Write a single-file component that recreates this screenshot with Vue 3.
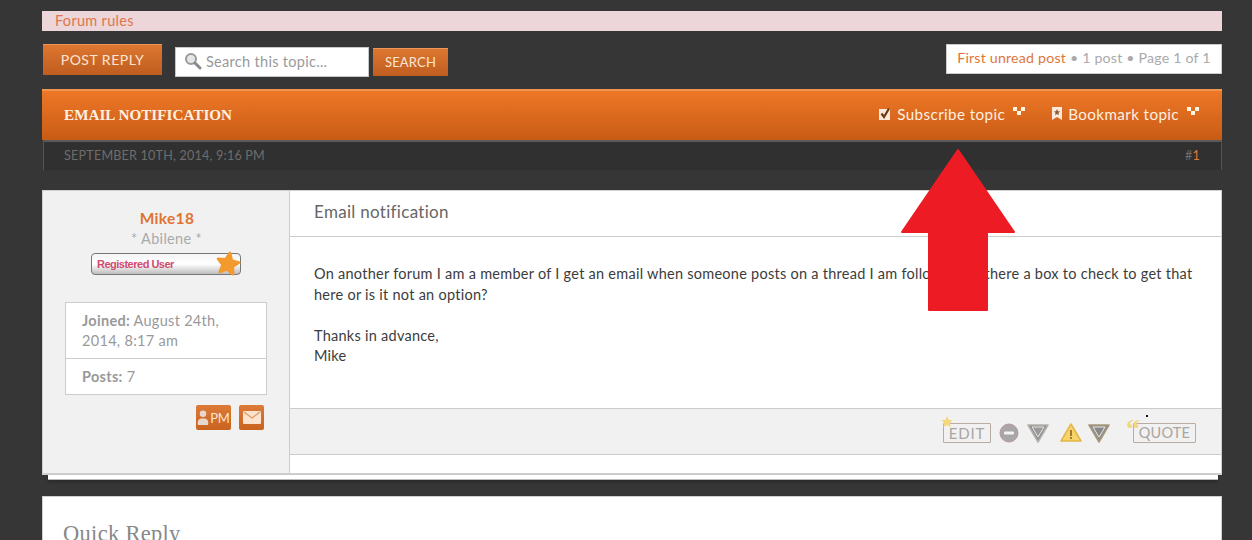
<template>
  <div class="page">
    <div class="rules">Forum rules</div>

    <div class="actions">
      <a class="btn post-reply">POST REPLY</a>
      <div class="search">
        <svg class="search-icon" width="18" height="18" viewBox="0 0 18 18">
          <circle cx="7" cy="7" r="5" fill="#e4e6e8" stroke="#9a9a9a" stroke-width="2" />
          <path d="M11 11l5 5" stroke="#8a8a8a" stroke-width="3" stroke-linecap="round" />
        </svg>
        <span>Search this topic...</span>
      </div>
      <a class="btn search-btn">SEARCH</a>
      <div class="pagination">
        <a class="link">First unread post</a>
        <span> • 1 post • Page 1 of 1</span>
      </div>
    </div>

    <div class="topic-head">
      <h2>EMAIL NOTIFICATION</h2>
      <div class="topic-tools">
        <a>
          <svg width="14" height="14" viewBox="0 0 14 14">
            <rect x="1" y="2" width="11" height="11" fill="#fbeadb" />
            <path d="M3.500 6.500l2.500 3.500 5-8.500" fill="none" stroke="#6b3a17" stroke-width="2.200" />
          </svg>
          <span>Subscribe topic</span>
          <svg class="dots" width="14" height="10" viewBox="0 0 14 10">
            <path d="M1 1h4v4H1zM9 1h4v4H9zM5 5h4v4H5z" fill="#fff3e2" />
          </svg>
        </a>
        <a>
          <svg width="12" height="15" viewBox="0 0 12 15">
            <path d="M1 1h10v13L6 11l-5 3z" fill="#fbeadb" />
            <path d="M6 3l1 2.300h2L7.400 7 8 9.300 6 8 4 9.300 4.600 7 3 5.300h2z" fill="#8d5a36" />
          </svg>
          <span>Bookmark topic</span>
          <svg class="dots" width="14" height="10" viewBox="0 0 14 10">
            <path d="M1 1h4v4H1zM9 1h4v4H9zM5 5h4v4H5z" fill="#fff3e2" />
          </svg>
        </a>
      </div>
    </div>

    <div class="topic-sub">
      <span>SEPTEMBER 10TH, 2014, 9:16 PM</span>
      <span>#<b>1</b></span>
    </div>

    <div class="post">
      <aside class="profile">
        <div class="username">Mike18</div>
        <div class="location">* Abilene *</div>
        <div class="rank">
          <span>Registered User</span>
          <svg class="rank-star" width="28" height="28" viewBox="0 0 28 28">
            <path transform="rotate(10 14 14)" d="M14 3L17 10 24.500 10.700 19 15.700 20.600 23 14 19.200 7.400 23 9 15.700 3.500 10.700 11 10z" fill="#f39a2e" stroke="#f39a2e" stroke-width="3" stroke-linejoin="round" />
          </svg>
        </div>
        <div class="stats">
          <div class="stat"><b>Joined:</b> August 24th, 2014, 8:17 am</div>
          <div class="stat"><b>Posts:</b> 7</div>
        </div>
        <div class="contact">
          <a class="contact-btn pm">
            <svg width="12" height="17" viewBox="0 0 13 18">
              <circle cx="6.500" cy="5" r="3.500" fill="#e6d8cf" />
              <path d="M1 17c-1-5 1-7 5.500-7s6.500 2 5.500 7z" fill="#e6d8cf" />
            </svg>
            PM
          </a>
          <a class="contact-btn mail">
            <svg width="18" height="13" viewBox="0 0 18 13">
              <rect width="18" height="13" rx="1" fill="#fae3cf" />
              <path d="M1 1l8 6 8-6" fill="none" stroke="#e39a63" stroke-width="1.300" />
            </svg>
          </a>
        </div>
      </aside>

      <div class="post-main">
        <h3>Email notification</h3>
        <div class="post-body">
          <p>On another forum I am a member of I get an email when someone posts on a thread I am following. Is there a box to check to get that here or is it not an option?</p>
          <p>Thanks in advance,<br />Mike</p>
        </div>
        <div class="post-foot">
          <a class="outline-btn edit">
            <svg class="corner" width="12" height="12" viewBox="0 0 12 12">
              <path d="M6 0l1.700 3.900 4.300.4-3.200 2.800 1 4.200L6 9.100l-3.800 2.200 1-4.200L0 4.300l4.300-.4z" fill="#f3d77b" />
            </svg>
            EDIT
          </a>
          <svg class="tool minus" width="20" height="20" viewBox="0 0 20 20">
            <circle cx="10" cy="10" r="9" fill="#a8a6a6" stroke="#b89a9a" />
            <rect x="5" y="8.500" width="10" height="3" rx="1" fill="#f4f4f4" />
          </svg>
          <svg class="tool down" width="22" height="20" viewBox="0 0 22 20">
            <path d="M1 2h20L11 19z" fill="#8f8f8f" stroke="#b5b0aa" stroke-width="1.500" stroke-linejoin="round" />
            <path d="M5 4h12l-6 10z" fill="#999" stroke="#e8e8e8" />
          </svg>
          <svg class="tool warn" width="22" height="20" viewBox="0 0 22 20">
            <path d="M11 1l10 17H1z" fill="#f7d46a" stroke="#e2b648" stroke-width="1.500" stroke-linejoin="round" />
            <path d="M10 7h2v6h-2zM10 14h2v2h-2z" fill="#a5792b" />
          </svg>
          <svg class="tool report" width="22" height="20" viewBox="0 0 22 20">
            <path d="M1 2h20L11 19z" fill="#8f8f8f" stroke="#a89678" stroke-width="1.500" stroke-linejoin="round" />
            <path d="M5 4h12l-6 10z" fill="#888" stroke="#e8e8e8" />
          </svg>
          <a class="outline-btn quote">
            <span class="quote-mark">“</span>
            QUOTE
          </a>
        </div>
        <div class="post-end"></div>
      </div>
    </div>
    <div class="post-shadow"></div>

    <div class="quick-reply">
      <h3>Quick Reply</h3>
    </div>

    <svg class="arrow" width="116" height="164" viewBox="0 0 116 164">
      <path d="M58 2L114 84H87V162H29V84H2z" fill="#ed1c24" stroke="#ed1c24" stroke-width="2" stroke-linejoin="round" />
    </svg>
    <span class="speck"></span>
  </div>
</template>

<script setup>
</script>

<style>
html,
body {
  margin: 0;
  background: #363636;
}
</style>

<style scoped>
.page {
  position: relative;
  height: 540px;
  overflow: hidden;
  box-sizing: border-box;
  padding: 11px 30px 0 42px;
  background: #363636;
  font-family: Lato, "Open Sans", sans-serif;
  font-size: 14.500px;
  letter-spacing: 0.300px;
  color: #3c3c3c;
}

.rules {
  height: 20px;
  line-height: 20px;
  padding-left: 13px;
  background: #ecd6d9;
  color: #e2744a;
}

.actions {
  display: flex;
  align-items: flex-start;
  height: 45px;
  margin-top: 13px;
}

.btn {
  box-sizing: border-box;
  display: block;
  text-align: center;
  color: #fbe6d4;
  background: linear-gradient(#dd7730, #bf5d20);
  border-top: 1px solid #ea955a;
}

.post-reply {
  width: 119px;
  height: 31px;
  margin-left: 1px;
  line-height: 29px;
  font-size: 14px;
  letter-spacing: 0.500px;
}

.search {
  box-sizing: border-box;
  display: flex;
  align-items: center;
  gap: 4px;
  width: 194px;
  height: 30px;
  margin: 3px 4px 0 13px;
  padding: 0 0 2px 8px;
  background: #fff;
  border: 1px solid #c8c8c8;
  color: #999;
  white-space: nowrap;
}

.search-icon {
  flex: none;
}

.search-btn {
  width: 75px;
  height: 28px;
  margin-top: 4px;
  line-height: 26px;
  font-size: 13px;
  letter-spacing: 0.200px;
}

.pagination {
  box-sizing: border-box;
  width: 276px;
  height: 30px;
  margin-left: auto;
  line-height: 26px;
  text-align: center;
  white-space: nowrap;
  font-size: 14.200px;
  letter-spacing: 0.200px;
  background: #fff;
  border: 1px solid #ccc;
  color: #aaa;
}

.link {
  color: #e0763a;
}

.topic-head {
  box-sizing: border-box;
  display: flex;
  align-items: center;
  justify-content: space-between;
  height: 51px;
  padding: 0 22px 2px 22px;
  background: linear-gradient(#ee7727, #c85c15);
  border-top: 2px solid #f09550;
}

.topic-head h2 {
  margin: 0;
  font-family: "Liberation Serif", serif;
  font-size: 15.200px;
  letter-spacing: 0;
  font-weight: 700;
  color: #fdf0e2;
}

.topic-tools {
  display: flex;
  gap: 25px;
  margin-top: -2px;
  color: #fdf0e2;
  font-size: 15.200px;
  letter-spacing: 0.400px;
}

.topic-tools a {
  display: flex;
  align-items: center;
  gap: 5px;
}

.dots {
  margin: -5px 0 0 2px;
}

.topic-sub {
  box-sizing: border-box;
  display: flex;
  align-items: center;
  justify-content: space-between;
  height: 30px;
  margin-left: 1px;
  padding: 0 21px 2px 20px;
  background: #303030;
  border-top: 2px solid #5c5a58;
  border-left: 1px solid #555;
  border-right: 1px solid #555;
  color: #6d6d6d;
  font-size: 12.600px;
  letter-spacing: 0.200px;
}

.topic-sub b {
  color: #e0763a;
  font-weight: 400;
}

.post {
  box-sizing: border-box;
  display: flex;
  height: 285px;
  margin-top: 20px;
  background: #fff;
  border: 1px solid #d0d0d0;
  border-bottom-width: 2px;
}

.profile {
  box-sizing: border-box;
  flex: none;
  width: 247px;
  padding: 17px 22px 0;
  background: #f1f1f1;
  border-right: 1px solid #ccc;
  text-align: center;
}

.username {
  padding-left: 2px;
  color: #df7433;
  font-size: 15.500px;
  font-weight: 700;
  line-height: 20px;
}

.location {
  padding-left: 1px;
  margin-top: 2px;
  color: #aaa;
  line-height: 18px;
}

.rank {
  position: relative;
  box-sizing: border-box;
  width: 150px;
  height: 22px;
  margin: 5px 0 0 26px;
  padding-left: 5px;
  line-height: 20px;
  text-align: left;
  font-family: "Liberation Sans", sans-serif;
  font-size: 11px;
  font-weight: 700;
  letter-spacing: -0.500px;
  color: #d04a70;
  background: linear-gradient(#f4f4f4, #fff 50%, #bdbdbd);
  border: 1px solid #777;
  border-radius: 4px;
}

.rank-star {
  position: absolute;
  top: -4px;
  right: -2px;
}

.stats {
  box-sizing: border-box;
  width: 202px;
  margin-top: 27px;
  background: #fff;
  border: 1px solid #ccc;
  text-align: left;
  color: #999;
}

.stat {
  padding: 8px 16px 7px;
  line-height: 20px;
}

.stat + .stat {
  border-top: 1px solid #ccc;
  padding: 8px 16px 7px;
}

.contact {
  display: flex;
  justify-content: flex-end;
  gap: 8px;
  width: 199px;
  margin-top: 10px;
}

.contact-btn {
  box-sizing: border-box;
  display: flex;
  align-items: center;
  justify-content: center;
  height: 25px;
  color: #fbe6d4;
  font-size: 13px;
  letter-spacing: -0.300px;
  background: linear-gradient(#dd7a38, #c9631f);
  border-radius: 2px;
}

.pm {
  width: 35px;
  gap: 1px;
}

.mail {
  width: 25px;
}

.post-main {
  flex: 1;
  display: flex;
  flex-direction: column;
  min-width: 0;
}

.post-main h3 {
  box-sizing: border-box;
  height: 46px;
  margin: 0;
  padding-left: 24px;
  line-height: 42px;
  font-size: 17px;
  font-weight: 400;
  color: #666;
  border-bottom: 1px solid #ccc;
}

.post-body {
  box-sizing: border-box;
  height: 171px;
  padding: 27px 24px 0;
  line-height: 20.500px;
  letter-spacing: 0.260px;
}

.post-body p {
  margin: 0 0 20.500px;
}

.post-foot {
  box-sizing: border-box;
  display: flex;
  align-items: center;
  justify-content: flex-end;
  height: 47px;
  padding: 3px 25px 0 0;
  background: #f1f1f1;
  border-top: 1px solid #ccc;
  border-bottom: 1px solid #ccc;
}

.outline-btn {
  position: relative;
  box-sizing: border-box;
  height: 20px;
  line-height: 18px;
  text-align: center;
  font-size: 14.500px;
  letter-spacing: 0.200px;
  color: #aaa5a0;
  border: 1.500px solid #b8aca3;
  border-radius: 1px;
}

.edit {
  width: 48px;
  letter-spacing: 0.800px;
  font-size: 15px;
}

.corner {
  position: absolute;
  top: -8px;
  left: -3px;
}

.tool {
  flex: none;
}

.minus {
  margin-left: 8px;
}

.down {
  margin-left: 8px;
}

.warn {
  margin-left: 11px;
}

.report {
  margin-left: 6px;
}

.quote {
  width: 63px;
  margin-left: 23px;
}

.quote-mark {
  position: absolute;
  top: -9px;
  left: -8px;
  font-family: "Liberation Serif", serif;
  font-size: 28px;
  line-height: 28px;
  font-weight: 700;
  color: #f3d77b;
}

.post-end {
  flex: 1;
}

.post-shadow {
  height: 4px;
  margin: 0 4px 0 6px;
  background: #fff;
  border-bottom: 1px solid #bbb;
  box-shadow: 0 2px 3px #2a2a2a;
}

.quick-reply {
  height: 60px;
  margin-top: 16px;
  padding: 24px 20px 0;
  background: #fff;
  border: 1px solid #d0d0d0;
}

.quick-reply h3 {
  margin: 0;
  font-family: "Liberation Serif", serif;
  font-size: 22.500px;
  font-weight: 400;
  letter-spacing: 0.300px;
  color: #888;
}

.arrow {
  position: absolute;
  top: 148px;
  left: 900px;
}

.speck {
  position: absolute;
  top: 415px;
  left: 1146px;
  width: 2px;
  height: 2px;
  background: #111;
}
</style>
